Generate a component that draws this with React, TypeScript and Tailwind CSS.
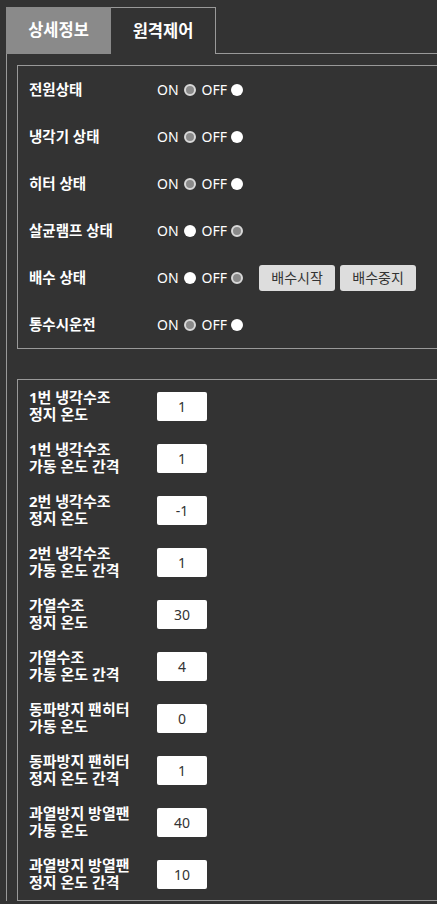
import React from "react";

const font = { fontFamily: '"Noto Sans", "Noto Sans CJK KR", sans-serif' };

const states = [
  { label: "전원상태", on: true },
  { label: "냉각기 상태", on: true },
  { label: "히터 상태", on: true },
  { label: "살균램프 상태", on: false },
  { label: "배수 상태", on: false, buttons: true },
  { label: "통수시운전", on: true },
];

const settings = [
  ["1번 냉각수조", "정지 온도", "1"],
  ["1번 냉각수조", "가동 온도 간격", "1"],
  ["2번 냉각수조", "정지 온도", "-1"],
  ["2번 냉각수조", "가동 온도 간격", "1"],
  ["가열수조", "정지 온도", "30"],
  ["가열수조", "가동 온도 간격", "4"],
  ["동파방지 팬히터", "가동 온도", "0"],
  ["동파방지 팬히터", "정지 온도 간격", "1"],
  ["과열방지 방열팬", "가동 온도", "40"],
  ["과열방지 방열팬", "정지 온도 간격", "10"],
];

function Radio({ checked }: { checked: boolean }) {
  return checked ? (
    <span className="inline-block w-3 h-3 rounded-full border-2 border-[#d8d8d8] bg-[#8a8a8a]" />
  ) : (
    <span className="inline-block w-3 h-3 rounded-full bg-white" />
  );
}

export default function App() {
  return (
    <div className="w-[437px] h-[904px] overflow-hidden bg-[#333333] text-white" style={font}>
      <div className="w-[520px] pt-[7px] pl-[6px]">
        <div className="flex h-[47px]">
          <div className="w-[105px] bg-[#8a8a8a] flex items-center justify-center text-[16.5px] font-bold">상세정보</div>
          <div className="w-[105px] border-t border-r border-[#999] flex items-center justify-center text-[16.5px] font-bold">원격제어</div>
          <div className="flex-1 border-b border-[#999]" />
        </div>
        <div className="border-l border-[#999] pl-[10px] pt-[11px]">
          <div className="border border-[#999]">
            {states.map((s) => (
              <div key={s.label} className="flex items-center h-[47px] pl-[11px]">
                <div className="w-[128px] text-[14.5px] font-bold">{s.label}</div>
                <div className="flex items-center text-[14px]">
                  <span>ON</span>
                  <span className="ml-[5px] mr-[6px] flex"><Radio checked={s.on} /></span>
                  <span>OFF</span>
                  <span className="ml-[4px] flex"><Radio checked={!s.on} /></span>
                </div>
                {s.buttons && (
                  <div className="flex gap-[5px] ml-[16px]">
                    <button className="w-[76px] h-[26px] bg-[#dddddd] text-[#333] text-[14px] rounded-[3px]">배수시작</button>
                    <button className="w-[76px] h-[26px] bg-[#dddddd] text-[#333] text-[14px] rounded-[3px]">배수중지</button>
                  </div>
                )}
              </div>
            ))}
          </div>
          <div className="border border-[#999] mt-[30px]">
            {settings.map(([a, b, v], i) => (
              <div key={i} className="flex items-center h-[52px] pl-[11px]">
                <div className="w-[128px] text-[15px] font-bold leading-[17px]">
                  <div>{a}</div>
                  <div>{b}</div>
                </div>
                <div className="w-[50px] h-[29px] bg-white rounded-[2px] flex items-center justify-center text-[14px] text-[#333]">{v}</div>
              </div>
            ))}
          </div>
        </div>
      </div>
    </div>
  );
}
